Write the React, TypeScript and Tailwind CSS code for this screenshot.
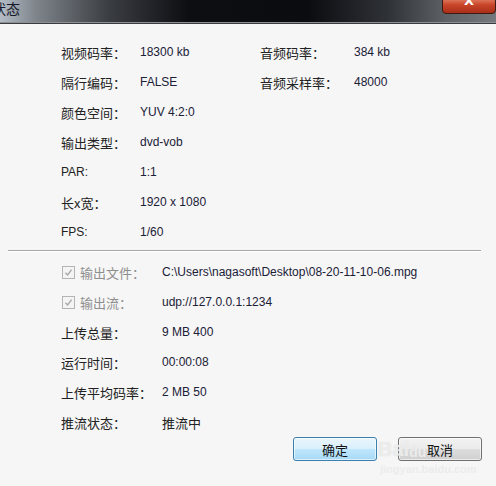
import React from "react";

const cjk = "font-['Noto_Sans_CJK_SC','Noto_Sans',sans-serif]";
const lat = "font-['Liberation_Sans','Noto_Sans_CJK_SC',sans-serif]";

function Label({ children, w, gray }: { children: React.ReactNode; w: string; gray?: boolean }) {
  return (
    <div className={`${w} ${cjk} text-[13px] leading-none ${gray ? "text-[#8e8e8e]" : "text-[#222222]"}`}>
      {children}
    </div>
  );
}

function Value({ children, w = "" }: { children: React.ReactNode; w?: string }) {
  return <div className={`${w} ${lat} text-[12px] leading-none text-[#1a2036]`}>{children}</div>;
}

function Check() {
  return (
    <div className="w-[13px] h-[13px] border border-[#b4b4b4] bg-[#f4f4f4] flex items-center justify-center mr-[5px]">
      <svg width="9" height="9" viewBox="0 0 9 9">
        <path d="M1.5 4.8 L3.6 7 L7.6 1.6" fill="none" stroke="#a8a8a8" strokeWidth="1.4" />
      </svg>
    </div>
  );
}

export default function App() {
  return (
    <div className="w-[496px] h-[486px] overflow-hidden bg-[#f6f6f6] flex flex-col relative">
      {/* title bar */}
      <div className="h-[22px] relative overflow-hidden bg-[linear-gradient(90deg,#b4bcc6_0%,#80868c_7%,#3a3d42_22%,#0c0e12_38%,#0a0c10_62%,#2e3136_78%,#5e6266_90%,#75787c_100%)] flex items-start">
        <div className={`${cjk} text-[14px] leading-none text-[#15192a] ml-[-8px] mt-[1px]`}>状态</div>
        <div className="absolute right-0 top-[-3px] w-[54px] h-[17px] rounded-[4px] border border-[#3b1a12] bg-[linear-gradient(180deg,#e5866c_0%,#c9462a_45%,#a92f18_100%)] flex items-start justify-center overflow-hidden">
          <span className="text-white font-['DejaVu_Sans',sans-serif] font-bold text-[13px] leading-none mt-[-4px]">X</span>
        </div>
      </div>
      <div className="h-[1px] bg-[#8c8f93]" />
      <div className="h-[1px] bg-[#3a3c40]" />

      {/* top section */}
      <div className="pt-[13px] pl-[61px] flex flex-col">
        <div className="h-[30px] flex items-center">
          <Label w="w-[79px]">视频码率：</Label>
          <Value w="w-[120px]">18300 kb</Value>
          <Label w="w-[94px]">音频码率：</Label>
          <Value>384 kb</Value>
        </div>
        <div className="h-[30px] flex items-center">
          <Label w="w-[79px]">隔行编码：</Label>
          <Value w="w-[120px]">FALSE</Value>
          <Label w="w-[94px]">音频采样率：</Label>
          <Value>48000</Value>
        </div>
        <div className="h-[30px] flex items-center">
          <Label w="w-[79px]">颜色空间：</Label>
          <Value>YUV 4:2:0</Value>
        </div>
        <div className="h-[30px] flex items-center">
          <Label w="w-[79px]">输出类型：</Label>
          <Value>dvd-vob</Value>
        </div>
        <div className="h-[30px] flex items-center">
          <div className={`w-[79px] ${lat} text-[12px] leading-none text-[#222222]`}>PAR:</div>
          <Value>1:1</Value>
        </div>
        <div className="h-[30px] flex items-center">
          <Label w="w-[79px]">长x宽：</Label>
          <Value>1920 x 1080</Value>
        </div>
        <div className="h-[30px] flex items-center">
          <div className={`w-[79px] ${lat} text-[12px] leading-none text-[#222222]`}>FPS:</div>
          <Value>1/60</Value>
        </div>
      </div>

      {/* separator */}
      <div className="mt-[3px] ml-[8px] w-[473px] h-[1px] bg-[#a6a6a6]" />
      <div className="ml-[8px] w-[473px] h-[1px] bg-[#ffffff]" />

      {/* bottom section */}
      <div className="pt-[5px] pl-[61px] flex flex-col">
        <div className="h-[30px] flex items-center">
          <div className="w-[101px] flex items-center pl-[1px]">
            <Check />
            <Label w="" gray>输出文件：</Label>
          </div>
          <Value>C:\Users\nagasoft\Desktop\08-20-11-10-06.mpg</Value>
        </div>
        <div className="h-[30px] flex items-center">
          <div className="w-[101px] flex items-center pl-[1px]">
            <Check />
            <Label w="" gray>输出流：</Label>
          </div>
          <Value>udp://127.0.0.1:1234</Value>
        </div>
        <div className="h-[30px] flex items-center">
          <Label w="w-[101px]">上传总量：</Label>
          <Value>9 MB 400</Value>
        </div>
        <div className="h-[30px] flex items-center">
          <Label w="w-[101px]">运行时间：</Label>
          <Value>00:00:08</Value>
        </div>
        <div className="h-[30px] flex items-center">
          <Label w="w-[101px]">上传平均码率：</Label>
          <Value>2 MB 50</Value>
        </div>
        <div className="h-[30px] flex items-center">
          <Label w="w-[101px]">推流状态：</Label>
          <div className={`${cjk} text-[13px] leading-none text-[#222222]`}>推流中</div>
        </div>
      </div>

      {/* buttons */}
      <div className="flex justify-end pr-[14px] gap-[21px]">
        <div className="w-[84px] h-[24px] rounded-[3px] border border-[#3c7fb1] bg-[linear-gradient(180deg,#eaf6fd_0%,#d9f0fc_48%,#bee6fd_52%,#a7d9f5_100%)] shadow-[inset_0_0_0_1px_rgba(255,255,255,0.6)] flex items-center justify-center">
          <span className={`${cjk} text-[13px] leading-none text-[#111]`}>确定</span>
        </div>
        <div className="w-[84px] h-[24px] rounded-[3px] border border-[#707070] bg-[linear-gradient(180deg,#f2f2f2_0%,#ebebeb_48%,#dddddd_52%,#cfcfcf_100%)] shadow-[inset_0_0_0_1px_rgba(255,255,255,0.6)] flex items-center justify-center">
          <span className={`${cjk} text-[13px] leading-none text-[#111]`}>取消</span>
        </div>
      </div>

      {/* watermark */}
      <div className="absolute left-[378px] top-[439px] flex items-end pointer-events-none">
        <span className={`${lat} text-[20px] font-bold leading-none text-white/60 [text-shadow:0_0_1px_#cfcfcf]`}>Bai</span>
        <span className={`${lat} text-[14px] font-bold leading-none text-white/60 [text-shadow:0_0_1px_#cfcfcf]`}>du</span>
      </div>
      <div className={`absolute left-[380px] top-[464px] ${lat} text-[11px] font-bold leading-none text-[#ececec] pointer-events-none`}>
        jingyan.baidu.com
      </div>
    </div>
  );
}
